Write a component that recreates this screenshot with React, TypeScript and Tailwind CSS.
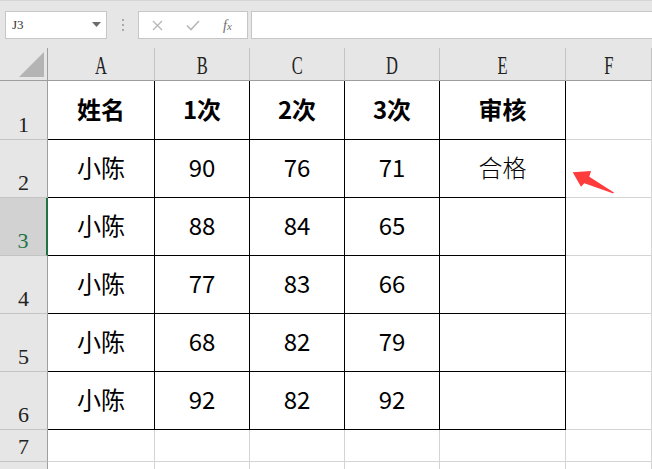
import React from 'react';

const cols = ['A', 'B', 'C', 'D', 'E', 'F'];

const header = ['姓名', '1次', '2次', '3次', '审核'];

const rows: (string | number)[][] = [
  ['小陈', 90, 76, 71, '合格'],
  ['小陈', 88, 84, 65, ''],
  ['小陈', 77, 83, 66, ''],
  ['小陈', 68, 82, 79, ''],
  ['小陈', 92, 82, 92, ''],
];

const sheetFont = { fontFamily: '"Noto Sans CJK SC", "Noto Sans", sans-serif' };
const serif = { fontFamily: '"Liberation Serif", "DejaVu Serif", serif' };

function RowHead({ n, active }: { n?: number; active?: boolean }) {
  return (
    <div
      className={
        active
          ? 'flex items-end justify-center border-b border-r-2 border-b-[#c4c4c4] border-r-[#217346] bg-[#d2d2d2] pb-[3px] text-[22px] leading-none text-[#217346]'
          : 'flex items-end justify-center border-b border-r border-b-[#c4c4c4] border-r-[#9e9e9e] bg-[#e6e6e6] pb-[3px] text-[22px] leading-none text-[#222]'
      }
      style={serif}
    >
      {n}
    </div>
  );
}

function Cell({ children, bold, inTable, light }: { children?: React.ReactNode; bold?: boolean; inTable?: boolean; light?: boolean }) {
  return (
    <div
      className={
        'flex items-center justify-center border-b border-r pb-[3px] text-[24px] leading-none text-black ' +
        (inTable ? 'border-black ' : 'border-[#d4d4d4] ') +
        (bold ? 'font-bold ' : '') +
        (light ? 'font-light text-[23px] ' : '')
      }
    >
      {children}
    </div>
  );
}

function Toolbar() {
  return (
    <div className="flex h-[48px] items-start gap-0 border-t border-[#d6d6d6] bg-[#e6e6e6] pt-[10px]">
      <div className="ml-[5px] flex h-[28px] w-[102px] items-center justify-between border border-[#c6c6c6] bg-white pl-[6px] pr-[5px]">
        <span className="text-[13px] text-[#333]" style={{ fontFamily: '"Liberation Serif", serif' }}>J3</span>
        <svg width="9" height="6" viewBox="0 0 9 6">
          <path d="M0 0h9L4.5 5z" fill="#6b6b6b" />
        </svg>
      </div>
      <div className="flex h-[28px] w-[31px] flex-col items-center justify-center gap-[3px]">
        <span className="h-[2px] w-[2px] bg-[#a8a8a8]" />
        <span className="h-[2px] w-[2px] bg-[#a8a8a8]" />
        <span className="h-[2px] w-[2px] bg-[#a8a8a8]" />
      </div>
      <div className="flex h-[28px] w-[110px] items-center border border-[#c6c6c6] bg-white">
        <svg className="ml-[13px]" width="11" height="11" viewBox="0 0 11 11">
          <path d="M1 1l9 9M10 1l-9 9" stroke="#b8b8b8" strokeWidth="1.4" />
        </svg>
        <svg className="ml-[23px]" width="14" height="11" viewBox="0 0 14 11">
          <path d="M1 5.5l4 4L13 1" stroke="#b8b8b8" strokeWidth="1.6" fill="none" />
        </svg>
        <span className="ml-[23px] text-[14px] italic text-[#6e6e6e]" style={serif}>
          f<span className="text-[11px]">x</span>
        </span>
      </div>
      <div className="ml-[3px] h-[28px] flex-1 border border-r-0 border-[#c6c6c6] bg-white" />
    </div>
  );
}

export default function App() {
  return (
    <div className="relative h-[469px] w-[652px] overflow-hidden bg-white" style={sheetFont}>
      <Toolbar />
      <div className="grid grid-cols-[48px_107px_95px_95px_95px_126px_1fr] grid-rows-[33px_59px_58px_58px_58px_58px_58px_32px_40px]">
        <div className="flex items-end justify-end border-b border-r border-b-[#9e9e9e] border-r-[#9e9e9e] bg-[#e6e6e6] pb-[3px] pr-[3px]">
          <svg width="25" height="25" viewBox="0 0 25 25">
            <path d="M25 0V25H0z" fill="#b4b4b4" />
          </svg>
        </div>
        {cols.map((c) => (
          <div
            key={c}
            className="flex items-center justify-center border-b border-r border-b-[#9e9e9e] border-r-[#c4c4c4] bg-[#e6e6e6] pt-[3px] text-[25px] leading-none text-[#222]"
            style={serif}
          >
            <span className="inline-block scale-x-[0.66]">{c}</span>
          </div>
        ))}

        <RowHead n={1} />
        {header.map((h) => (
          <Cell key={h} bold inTable>
            {h}
          </Cell>
        ))}
        <Cell />

        {rows.map((r, i) => (
          <React.Fragment key={i}>
            <RowHead n={i + 2} active={i === 1} />
            {r.map((v, j) => (
              <Cell key={j} inTable light={j === 4}>
                {v}
              </Cell>
            ))}
            <Cell />
          </React.Fragment>
        ))}

        <RowHead n={7} />
        {cols.map((c) => (
          <Cell key={c} />
        ))}
        <RowHead />
        {cols.map((c) => (
          <Cell key={c} />
        ))}
      </div>

      <svg className="absolute left-[570px] top-[168px]" width="46" height="28" viewBox="0 0 46 28">
        <path d="M2.7 4.3L21 3L19.3 8.7L44.3 24.7L42.7 25.3L14.3 15.3L11 18.7Z" fill="#fe3c3c" />
      </svg>
    </div>
  );
}
